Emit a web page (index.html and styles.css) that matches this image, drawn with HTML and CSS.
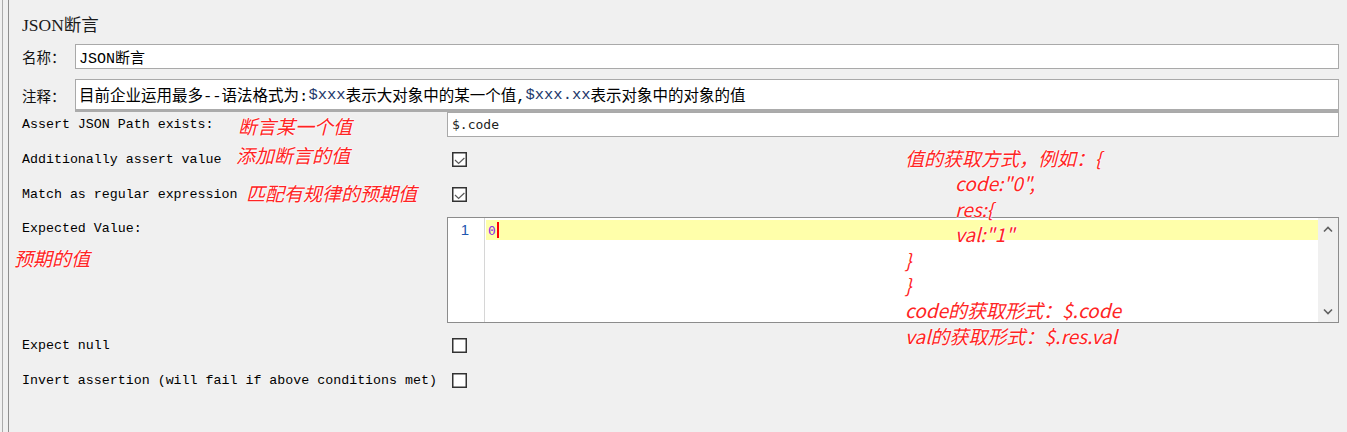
FILE: index.html
```html
<!DOCTYPE html>
<html>
<head>
<meta charset="utf-8">
<title>JSON断言</title>
<link rel="stylesheet" href="styles.css">
</head>
<body>
<div class="frame">
  <div class="panel">
    <div class="title">JSON断言</div>

    <div class="field-row name-row">
      <span class="flabel">名称：</span>
      <div class="input name-input">JSON断言</div>
    </div>

    <div class="field-row comment-row">
      <span class="flabel">注释：</span>
      <div class="input comment-input">目前企业运用最多--语法格式为:<span class="var">$xxx</span>表示大对象中的某一个值,<span class="var">$xxx.xx</span>表示对象中的对象的值</div>
    </div>

    <div class="arow path-row">
      <div class="alabel">Assert JSON Path exists:</div>
      <div class="input path-input">$.code</div>
    </div>

    <div class="arow">
      <div class="alabel">Additionally assert value</div>
      <div class="cb-cell">
        <svg class="cb" width="15" height="15" viewBox="0 0 15 15"><rect x="0.75" y="0.75" width="13.5" height="13.5" fill="#fff" stroke="#333" stroke-width="1.5"/><polyline points="3,8 6.6,11.4 12.4,6" fill="none" stroke="#5a5a5a" stroke-width="1.2"/></svg>
      </div>
    </div>

    <div class="arow">
      <div class="alabel">Match as regular expression</div>
      <div class="cb-cell">
        <svg class="cb" width="15" height="15" viewBox="0 0 15 15"><rect x="0.75" y="0.75" width="13.5" height="13.5" fill="#fff" stroke="#333" stroke-width="1.5"/><polyline points="3,8 6.6,11.4 12.4,6" fill="none" stroke="#5a5a5a" stroke-width="1.2"/></svg>
      </div>
    </div>

    <div class="arow editor-row">
      <div class="alabel top">Expected Value:</div>
      <div class="editor">
        <div class="gutter"><div class="lnum">1</div></div>
        <div class="code">
          <div class="curline"><span class="num">0</span><span class="caret"></span></div>
        </div>
        <div class="vscroll">
          <svg width="10" height="7" viewBox="0 0 10 7"><polyline points="1,5.5 5,1.5 9,5.5" fill="none" stroke="#606060" stroke-width="1.6"/></svg>
          <svg width="10" height="7" viewBox="0 0 10 7"><polyline points="1,1.5 5,5.5 9,1.5" fill="none" stroke="#606060" stroke-width="1.6"/></svg>
        </div>
      </div>
    </div>

    <div class="arow">
      <div class="alabel">Expect null</div>
      <div class="cb-cell">
        <svg class="cb" width="15" height="15" viewBox="0 0 15 15"><rect x="0.75" y="0.75" width="13.5" height="13.5" fill="#fff" stroke="#333" stroke-width="1.5"/></svg>
      </div>
    </div>

    <div class="arow">
      <div class="alabel">Invert assertion (will fail if above conditions met)</div>
      <div class="cb-cell">
        <svg class="cb" width="15" height="15" viewBox="0 0 15 15"><rect x="0.75" y="0.75" width="13.5" height="13.5" fill="#fff" stroke="#333" stroke-width="1.5"/></svg>
      </div>
    </div>
  </div>
</div>

<div class="ann a1">断言某一个值</div>
<div class="ann a2">添加断言的值</div>
<div class="ann a3">匹配有规律的预期值</div>
<div class="ann a4">预期的值</div>
<div class="ann block">
  <div>值的获取方式，例如：{</div>
  <div class="ind">code:"0",</div>
  <div class="ind">res:{</div>
  <div class="ind">val:"1"</div>
  <div>}</div>
  <div>}</div>
  <div>code的获取形式：$.code</div>
  <div>val的获取形式：$.res.val</div>
</div>
</body>
</html>
```

FILE: styles.css
```css
html, body {
  margin: 0;
  padding: 0;
}

body {
  background: #f0f0f0;
  width: 1347px;
  height: 432px;
  overflow: hidden;
  position: relative;
  font-family: "Noto Sans CJK SC", sans-serif;
  color: #111;
}

.frame {
  margin-left: 2px;
  border-left: 1px solid #ababab;
  padding-left: 5px;
  height: 432px;
  box-sizing: border-box;
}

.panel {
  border-left: 1px solid #8e8e8e;
  padding: 0 8px 0 13px;
  height: 100%;
}

.title {
  height: 44px;
  box-sizing: border-box;
  padding-top: 3px;
  display: flex;
  align-items: center;
  font-family: "Liberation Serif", "Noto Sans CJK SC", serif;
  font-size: 17.5px;
  color: #1a1a1a;
}

.field-row {
  display: flex;
  align-items: center;
}

.name-row {
  height: 25px;
  margin-bottom: 10px;
}

.comment-row {
  height: 33px;
}

.flabel {
  width: 53px;
  flex: none;
  font-size: 14.5px;
  line-height: 18px;
  color: #111;
}

.input {
  background: #fff;
  border: 1px solid #a9a9a9;
  box-sizing: border-box;
  display: flex;
  align-items: center;
  white-space: nowrap;
  overflow: hidden;
}

.name-input {
  flex: 1;
  height: 25px;
  padding-left: 3px;
  font-family: "Liberation Mono", "Noto Sans CJK SC", monospace;
  font-size: 15px;
  color: #000;
}

.comment-input {
  flex: 1;
  height: 33px;
  border-bottom: 3px solid #ababab;
  padding-left: 3px;
  font-family: "Liberation Mono", "Noto Sans CJK SC", monospace;
  font-size: 15.5px;
  color: #000;
}

.var {
  color: #23386a;
}

.arow {
  display: flex;
  align-items: center;
  height: 35px;
}

.path-row {
  height: 25px;
  margin-bottom: 5px;
}

.alabel {
  width: 425px;
  flex: none;
  font-family: "Liberation Mono", monospace;
  font-size: 13.3px;
  line-height: 16px;
  color: #000;
  white-space: nowrap;
}

.alabel.top {
  align-self: flex-start;
  padding-top: 4px;
}

.path-input {
  flex: 1;
  height: 25px;
  padding-left: 4px;
  font-family: "DejaVu Sans Mono", monospace;
  font-size: 13px;
  color: #222;
}

.cb-cell {
  flex: 1;
  padding-left: 5px;
  display: flex;
  align-items: center;
}

.cb {
  display: block;
}

.editor-row {
  height: 106px;
  margin: 5px 0;
}

.editor {
  flex: 1;
  height: 106px;
  box-sizing: border-box;
  border: 1px solid #8c8c8c;
  background: #fff;
  display: flex;
}

.gutter {
  width: 36px;
  flex: none;
  border-right: 1px solid #d6d6d6;
  box-sizing: content-box;
  padding-top: 2px;
}

.lnum {
  height: 20px;
  line-height: 20px;
  text-align: right;
  padding-right: 15px;
  font-family: "Liberation Sans", sans-serif;
  font-size: 15px;
  color: #1f57b0;
}

.code {
  flex: 1;
  padding: 2px 0 0 1px;
}

.curline {
  height: 20px;
  background: #ffffaa;
  display: flex;
  align-items: center;
  padding-left: 2px;
}

.num {
  font-family: "DejaVu Sans Mono", monospace;
  font-size: 13px;
  color: #8a2be2;
}

.caret {
  width: 2px;
  height: 16px;
  background: #ff0000;
  margin-left: 1px;
}

.vscroll {
  width: 20px;
  flex: none;
  background: #f0f0f0;
  display: flex;
  flex-direction: column;
  align-items: center;
  justify-content: space-between;
  padding: 8px 0 7px;
  box-sizing: border-box;
}

.vscroll svg {
  display: block;
}

.ann {
  position: absolute;
  color: #ff2424;
  font-family: "Noto Sans CJK SC", sans-serif;
  font-style: italic;
  font-size: 19px;
  line-height: 26px;
  white-space: nowrap;
  text-shadow: 0 0 2px #fff, 0 0 2px #fff, 0 0 1px #fff;
}

.a1 { left: 238px; top: 113px; }
.a2 { left: 236px; top: 142px; }
.a3 { left: 246px; top: 180px; }
.a4 { left: 14px; top: 245px; }

.block {
  left: 905px;
  top: 145px;
  line-height: 25.4px;
}

.block .ind {
  padding-left: 50px;
}
```
